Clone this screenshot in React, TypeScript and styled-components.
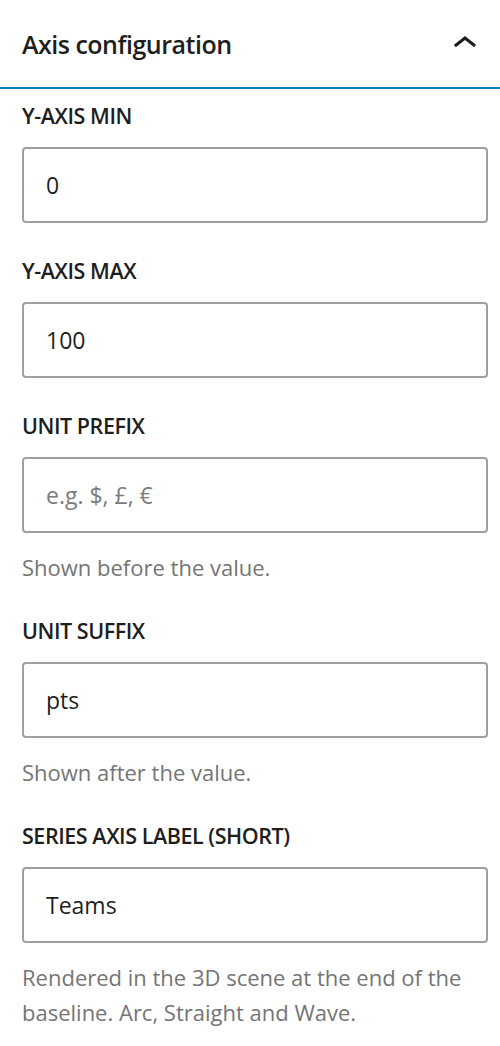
import React from "react";
import styled, { createGlobalStyle } from "styled-components";

const GlobalStyle = createGlobalStyle`
  html, body {
    margin: 0;
    padding: 0;
    background: #ffffff;
  }
  body {
    font-family: "Open Sans", "Noto Sans", sans-serif;
    color: #1e1e1e;
    -webkit-font-smoothing: antialiased;
  }
  * { box-sizing: border-box; }
`;

const Panel = styled.section`
  width: 500px;
  background: #ffffff;
`;

const Header = styled.button`
  display: flex;
  align-items: center;
  justify-content: space-between;
  width: 100%;
  height: 89px;
  padding: 0 11px 0 22px;
  margin: 0;
  border: none;
  border-bottom: 2px solid #007cba;
  background: #ffffff;
  font-family: "Open Sans", "Noto Sans", sans-serif;
  font-size: 25px;
  font-weight: 600;
  letter-spacing: -0.5px;
  line-height: 32px;
  color: #1e1e1e;
  text-align: left;
  cursor: pointer;
`;

const Title = styled.span`
  padding-top: 1px;
`;

const Body = styled.div`
  display: flex;
  flex-direction: column;
  padding: 13px 12px 0 22px;
`;

const Field = styled.div<{ $hasHelp?: boolean }>`
  display: flex;
  flex-direction: column;
  gap: 17px;
  margin-bottom: ${(p) => (p.$hasHelp ? "32px" : "34px")};
`;

const Label = styled.label`
  font-size: 21.5px;
  font-weight: 600;
  letter-spacing: -0.45px;
  line-height: 28px;
  text-transform: uppercase;
  color: #1e1e1e;
`;

const Input = styled.input`
  display: block;
  width: 100%;
  height: 76px;
  padding: 0 22px;
  border: 2px solid #a0a0a0;
  border-radius: 4px;
  background: #ffffff;
  font-family: "Open Sans", "Noto Sans", sans-serif;
  font-size: 23px;
  color: #1e1e1e;
  outline: none;

  &::placeholder {
    color: #7c7c7c;
    opacity: 1;
  }
`;

const Help = styled.p`
  margin: 0;
  font-size: 22px;
  line-height: 35px;
  color: #757575;
`;

const ChevronUp = () => (
  <svg width="48" height="48" viewBox="0 0 24 24" aria-hidden="true">
    <path
      d="M6.5 12.4L12 8l5.5 4.4-.9 1.2L12 10l-4.6 3.6-1-1.2z"
      fill="#1e1e1e"
    />
  </svg>
);

type FieldDef = {
  id: string;
  label: string;
  value?: string;
  placeholder?: string;
  help?: string;
};

const fields: FieldDef[] = [
  { id: "ymin", label: "Y-axis min", value: "0" },
  { id: "ymax", label: "Y-axis max", value: "100" },
  {
    id: "prefix",
    label: "Unit prefix",
    placeholder: "e.g. $, £, €",
    help: "Shown before the value.",
  },
  {
    id: "suffix",
    label: "Unit suffix",
    value: "pts",
    help: "Shown after the value.",
  },
  {
    id: "series",
    label: "Series axis label (short)",
    value: "Teams",
    help: "Rendered in the 3D scene at the end of the baseline. Arc, Straight and Wave.",
  },
];

export default function App() {
  return (
    <>
      <GlobalStyle />
      <Panel>
        <Header type="button" aria-expanded="true">
          <Title>Axis configuration</Title>
          <ChevronUp />
        </Header>
        <Body>
          {fields.map((f) => (
            <Field key={f.id} $hasHelp={!!f.help}>
              <Label htmlFor={f.id}>{f.label}</Label>
              <Input
                id={f.id}
                type="text"
                defaultValue={f.value}
                placeholder={f.placeholder}
              />
              {f.help && <Help>{f.help}</Help>}
            </Field>
          ))}
        </Body>
      </Panel>
    </>
  );
}
